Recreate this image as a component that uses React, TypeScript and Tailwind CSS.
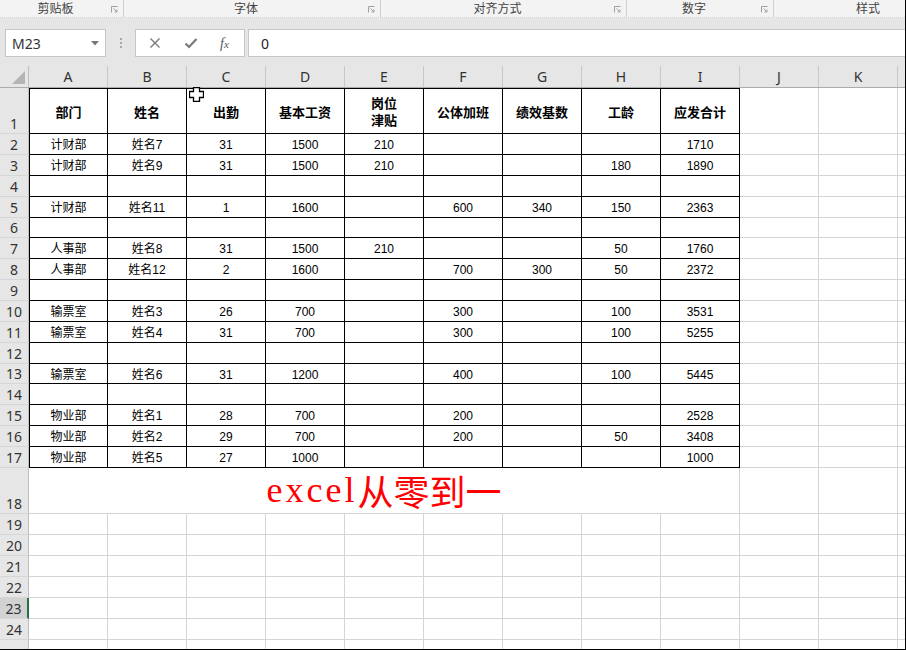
const COLS = ["A", "B", "C", "D", "E", "F", "G", "H", "I", "J", "K", "L"];

const HEADER = ["部门", "姓名", "出勤", "基本工资", "岗位\n津贴", "公体加班", "绩效基数", "工龄", "应发合计"];

// rows 2..17, null = empty row inside the table
const DATA: (string[] | null)[] = [
    ["计财部", "姓名7", "31", "1500", "210", "", "", "", "1710"],
    ["计财部", "姓名9", "31", "1500", "210", "", "", "180", "1890"],
    null,
    ["计财部", "姓名11", "1", "1600", "", "600", "340", "150", "2363"],
    null,
    ["人事部", "姓名8", "31", "1500", "210", "", "", "50", "1760"],
    ["人事部", "姓名12", "2", "1600", "", "700", "300", "50", "2372"],
    null,
    ["输票室", "姓名3", "26", "700", "", "300", "", "100", "3531"],
    ["输票室", "姓名4", "31", "700", "", "300", "", "100", "5255"],
    null,
    ["输票室", "姓名6", "31", "1200", "", "400", "", "100", "5445"],
    null,
    ["物业部", "姓名1", "28", "700", "", "200", "", "", "2528"],
    ["物业部", "姓名2", "29", "700", "", "200", "", "50", "3408"],
    ["物业部", "姓名5", "27", "1000", "", "", "", "", "1000"],
];

// heights of rows 2..17 (row pitch is 20.875px)
const DATA_H = [21, 21, 21, 21, 20, 21, 21, 21, 21, 21, 21, 20, 21, 21, 21, 21];

const cellFont = "font-['Liberation_Sans','Noto_Sans_CJK_SC',sans-serif]";
const uiFont = "font-['Noto_Sans','Noto_Sans_CJK_SC',sans-serif]";

const Launcher = () => (
    <svg width="7" height="7" viewBox="0 0 7 7" className="mt-[6px]">
        <path d="M0.5 6.5 V0.5 H6.5" fill="none" stroke="#a0a0a0" strokeWidth="1" />
        <path d="M2.5 2.5 L6 6 M6 3.5 V6 H3.5" fill="none" stroke="#a0a0a0" strokeWidth="1" />
    </svg>
);

const RibbonGroup = ({ label, width, launcher = true }: { label: string; width: number; launcher?: boolean }) => (
    <div
        className="flex h-full shrink-0 items-start border-r border-[#d0d0d0] pr-[5px]"
        style={{ width }}
    >
        <div className={`flex-1 text-center text-[12px] leading-[17px] text-[#444] ${uiFont}`}>{label}</div>
        {launcher && <Launcher />}
    </div>
);

const RowHead = ({ n, h, selected = false }: { n: number; h: string; selected?: boolean }) => (
    <div
        className={`flex w-[29px] shrink-0 items-end justify-center border-b border-[#d6d6d6] pb-[1px] text-[14px] leading-[16px] text-[#333] ${uiFont} ${h} ${
            selected ? "border-r-2 border-r-[#217346] bg-[#d2d2d2]" : "border-r border-r-[#bdbdbd] bg-[#e6e6e6]"
        }`}
    >
        {n}
    </div>
);

const GrayCell = ({ w = "w-[79px]" }: { w?: string }) => (
    <div className={`${w} shrink-0 border-b border-r border-[#d4d4d4]`} />
);

const TailCells = () => (
    <>
        <GrayCell />
        <GrayCell />
        <div className="w-[7px] shrink-0 border-b border-[#d4d4d4]" />
    </>
);

const TableRow = ({ n, values, h, bold = false, top = false }: { n: number; values: string[]; h: string; bold?: boolean; top?: boolean }) => (
    <div className={`flex ${h}`}>
        <RowHead n={n} h={h} />
        {values.map((v, i) => (
            <div
                key={i}
                className={`flex w-[79px] shrink-0 items-center justify-center whitespace-pre-line border-b border-r border-black text-center text-black ${cellFont} ${
                    i === 0 ? "border-l" : ""
                } ${top ? "border-t" : ""} ${bold ? "pt-[2px] text-[13px] font-bold leading-[17px]" : "pt-[2px] text-[12px] leading-[14px]"}`}
            >
                {v}
            </div>
        ))}
        <TailCells />
    </div>
);

export default function App() {
    const empty = ["", "", "", "", "", "", "", "", ""];
    return (
        <div className="relative h-[650px] w-[906px] overflow-hidden border-b border-r border-black bg-white">
            {/* ribbon group labels */}
            <div className="flex h-[18px] border-b border-dotted border-[#cfcfcf] bg-[#f3f3f3]">
                <RibbonGroup label="剪贴板" width={124} />
                <RibbonGroup label="字体" width={257} />
                <RibbonGroup label="对齐方式" width={246} />
                <RibbonGroup label="数字" width={147} />
                <div className={`flex-1 pl-[82px] text-[12px] leading-[17px] text-[#444] ${uiFont}`}>样式</div>
            </div>

            {/* formula bar */}
            <div className="flex h-[48px] items-start bg-[#e6e6e6] pt-[11px]">
                <div className="ml-[5px] flex h-[28px] w-[101px] items-center justify-between border border-[#c6c6c6] bg-white pl-[6px] pr-[6px]">
                    <span className={`text-[14px] text-[#333] ${uiFont}`}>M23</span>
                    <svg width="8" height="5" viewBox="0 0 8 5">
                        <path d="M0 0 H8 L4 4.5 Z" fill="#777" />
                    </svg>
                </div>
                <div className="ml-[14px] mt-[9px] flex h-[10px] flex-col justify-between">
                    <span className="h-[2px] w-[2px] bg-[#a8a8a8]" />
                    <span className="h-[2px] w-[2px] bg-[#a8a8a8]" />
                    <span className="h-[2px] w-[2px] bg-[#a8a8a8]" />
                </div>
                <div className="ml-[13px] flex h-[28px] w-[110px] items-center border border-[#c6c6c6] bg-white">
                    <svg width="12" height="12" viewBox="0 0 12 12" className="ml-[13px]">
                        <path d="M1.5 1.5 L10.5 10.5 M10.5 1.5 L1.5 10.5" stroke="#7a7a7a" strokeWidth="1.4" />
                    </svg>
                    <svg width="14" height="12" viewBox="0 0 14 12" className="ml-[23px]">
                        <path d="M1.5 6.5 L5 10 L12.5 2" fill="none" stroke="#7a7a7a" strokeWidth="2.2" />
                    </svg>
                    <span className="ml-[22px] font-['Liberation_Serif',serif] text-[14px] italic text-[#555]">
                        f<span className="text-[11px]">x</span>
                    </span>
                </div>
                <div className={`ml-[3px] flex h-[28px] flex-1 items-center border-y border-l border-[#c6c6c6] bg-white pl-[12px] text-[14px] text-[#222] ${uiFont}`}>
                    0
                </div>
            </div>

            {/* column headers */}
            <div className="flex h-[22px] border-b border-[#ababab] bg-[#e6e6e6]">
                <div className="relative w-[29px] shrink-0 border-r border-[#bdbdbd]">
                    <svg width="13" height="13" viewBox="0 0 13 13" className="absolute bottom-[3px] right-[3px]">
                        <path d="M13 0 V13 H0 Z" fill="#b4b4b4" />
                    </svg>
                </div>
                {COLS.map((c) => (
                    <div
                        key={c}
                        className={`flex shrink-0 items-center justify-center text-[14px] text-[#333] ${uiFont} ${
                            c === "L" ? "w-[7px]" : "w-[79px] border-r border-[#c8c8c8]"
                        }`}
                    >
                        {c === "L" ? "" : c}
                    </div>
                ))}
            </div>

            {/* row 1 */}
            <TableRow n={1} values={HEADER} h="h-[46px]" bold top />

            {/* rows 2..17 */}
            {DATA.map((r, i) => (
                <TableRow key={i} n={i + 2} values={r ?? empty} h={DATA_H[i] === 21 ? "h-[21px]" : "h-[20px]"} />
            ))}

            {/* row 18 with merged title */}
            <div className="flex h-[46px]">
                <RowHead n={18} h="h-[46px]" />
                <div className="flex w-[711px] shrink-0 items-end justify-center border-b border-r border-[#d4d4d4] pb-[1px] text-[36px] leading-[44px] text-[#ff0000]">
                    <span className="font-['Liberation_Serif',serif] tracking-[3px]">excel</span>
                    <span className="font-['Noto_Sans_CJK_SC',sans-serif]">从零到一</span>
                </div>
                <TailCells />
            </div>

            {/* rows 19..24, plus the edge of row 25 */}
            {[19, 20, 21, 22, 23, 24].map((n) => (
                <div key={n} className="flex h-[21px]">
                    <RowHead n={n} h="h-[21px]" selected={n === 23} />
                    {COLS.slice(0, 9).map((c) => (
                        <GrayCell key={c} />
                    ))}
                    <TailCells />
                </div>
            ))}
            <div className="flex h-[21px]">
                <div className="w-[29px] shrink-0 border-r border-[#bdbdbd] bg-[#e6e6e6]" />
                {COLS.slice(0, 9).map((c) => (
                    <GrayCell key={c} />
                ))}
                <TailCells />
            </div>

            {/* mouse cursor */}
            <svg width="15" height="15" viewBox="0 0 15 15" className="absolute left-[189px] top-[87px]">
                <path
                    d="M4.5 0.5 H10.5 V4.5 H14.5 V10.5 H10.5 V14.5 H4.5 V10.5 H0.5 V4.5 H4.5 Z"
                    fill="white"
                    stroke="black"
                    strokeWidth="1.3"
                />
            </svg>
        </div>
    );
}
